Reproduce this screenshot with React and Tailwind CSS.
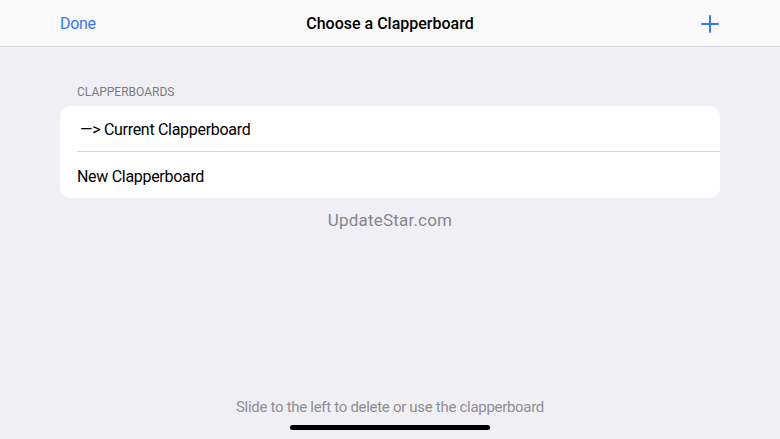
export default function App() {
  return (
    <div
      className="w-[780px] h-[439px] bg-[#f0f0f4] flex flex-col overflow-hidden"
      style={{ fontFamily: "Roboto, 'Liberation Sans', sans-serif" }}
    >
      <header className="h-[47px] shrink-0 bg-[#f9f9f9] border-b border-[#d6d6da] flex items-center px-[60px] pt-[1px]">
        <div className="w-[100px] text-[16px] text-[#3478f6] tracking-[-0.3px]">Done</div>
        <div className="flex-1 text-center text-[16px] font-medium text-black">
          Choose a Clapperboard
        </div>
        <div className="w-[100px] flex justify-end pr-[1px]">
          <svg width="18" height="18" viewBox="0 0 18 18" fill="none">
            <path d="M9 1v16M1 9h16" stroke="#3478f6" strokeWidth="2" strokeLinecap="round" />
          </svg>
        </div>
      </header>

      <main className="flex-1 flex flex-col px-[60px]">
        <div className="mt-[36px] pl-[17px] text-[12px] text-[#7b7b80]">CLAPPERBOARDS</div>
        <div className="mt-[5px] bg-white rounded-[10px] pl-[17px]">
          <div className="h-[46px] pt-[3px] flex items-center border-b border-[#d9d9dd] text-[16px] tracking-[-0.3px] text-black">
            <span className="pl-[3px]">—&gt; Current Clapperboard</span>
          </div>
          <div className="h-[46px] pt-[3px] flex items-center text-[16px] tracking-[-0.3px] text-black">New Clapperboard</div>
        </div>
        <div className="mt-[10px] text-center text-[17px] text-[#86868b] tracking-[0.2px]">UpdateStar.com</div>

        <div className="mt-auto text-center text-[15px] tracking-[-0.3px] text-[#8e8e93] pb-[7px]">
          Slide to the left to delete or use the clapperboard
        </div>
      </main>
      <div className="h-[14px] flex justify-center">
        <div className="w-[200px] h-[5px] rounded-full bg-black" />
      </div>
    </div>
  );
}
